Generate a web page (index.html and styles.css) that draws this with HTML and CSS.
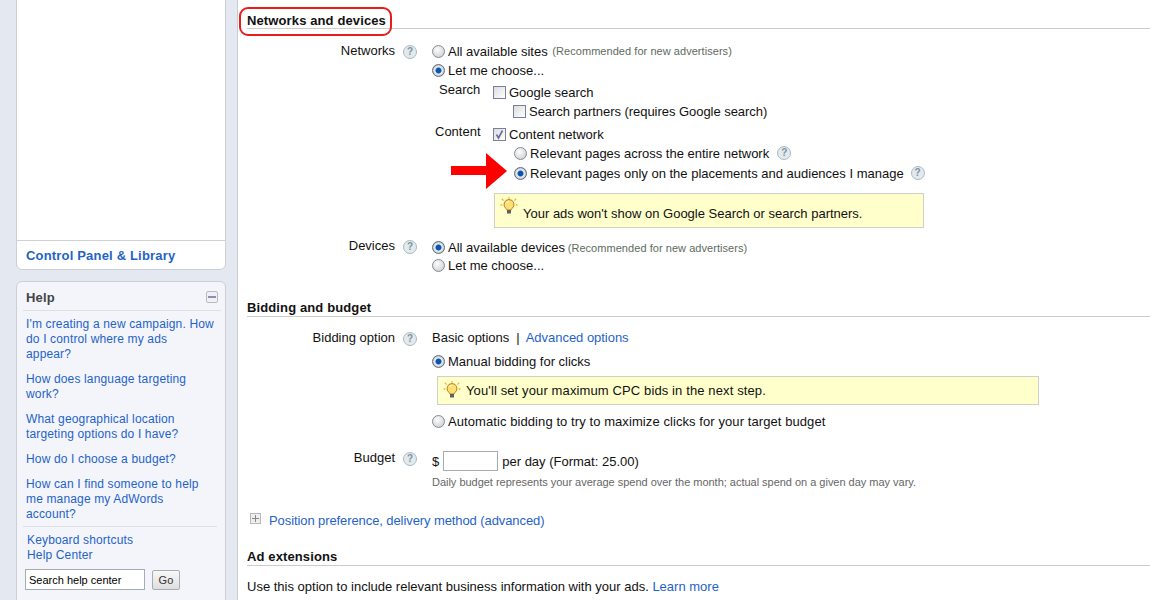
FILE: index.html
```html
<!DOCTYPE html>
<html lang="en">
<head>
<meta charset="utf-8">
<title>Networks and devices</title>
<link rel="stylesheet" href="styles.css">
</head>
<body>
<div class="page">
  <aside class="sidebar">
    <div class="panel">
      <div class="panel-blank"></div>
      <a class="panel-foot">Control Panel &amp; Library</a>
    </div>
    <div class="help">
      <div class="help-head"><span>Help</span><span class="collapse"></span></div>
      <ul class="help-links">
        <li>I'm creating a new campaign. How<br>do I control where my ads<br>appear?</li>
        <li>How does language targeting<br>work?</li>
        <li>What geographical location<br>targeting options do I have?</li>
        <li>How do I choose a budget?</li>
        <li>How can I find someone to help<br>me manage my AdWords<br>account?</li>
      </ul>
      <div class="help-extra">
        <a>Keyboard shortcuts</a>
        <a>Help Center</a>
      </div>
      <div class="help-search">
        <span class="search-box">Search help center</span>
        <span class="go">Go</span>
      </div>
    </div>
  </aside>
  <main class="main">
    <h2 class="section first">Networks and devices</h2>
    <div class="highlight"></div>

    <div class="row r-networks">
      <div class="label">Networks</div><span class="q">?</span>
      <div class="field">
        <div class="opt"><span class="radio"></span>All available sites <small class="rec rec-a">(Recommended for new advertisers)</small></div>
        <div class="opt short"><span class="radio on"></span>Let me choose...</div>
        <div class="sub s-search">
          <span class="sub-label">Search</span>
          <div>
            <div class="opt-c"><span class="check"></span>Google search</div>
            <div class="opt-c indent tight"><span class="check"></span>Search partners (requires Google search)</div>
          </div>
        </div>
        <div class="sub s-content">
          <span class="sub-label">Content</span>
          <div>
            <div class="opt-c"><span class="check on"><svg viewBox="0 0 13 13" width="13" height="13"><path d="M3.5 6.500l2 3.500 4-7.500" fill="none" stroke="#6a6f9a" stroke-width="1.600"/></svg></span>Content network</div>
            <div class="opt indent-r"><span class="radio"></span>Relevant pages across the entire network<span class="q q-inline">?</span></div>
            <div class="opt indent-r"><span class="radio on"></span>Relevant pages only on the placements and audiences I manage<span class="q q-inline q-near">?</span></div>
          </div>
        </div>
        <div class="tip tip-a">
          <svg class="bulb" viewBox="0 0 18 18" width="18" height="18"><path d="M9 2.500a5 5 0 0 0-3 9c.6.500.8 1 .8 1.500h4.400c0-.5.200-1 .8-1.500a5 5 0 0 0-3-9z" fill="#fcdf76" stroke="#b9821c"/><path d="M7 5.500a3 3 0 0 1 2-1" fill="none" stroke="#fffbe0" stroke-width="1.200"/><rect x="7" y="13" width="4" height="3.500" fill="#5f5f5f"/><path d="M.5 8h1.800M15.700 8h1.800M1.800 1.800l1.800 1.800M16.200 1.800l-1.800 1.800M9 0v1.800" stroke="#efb92e" stroke-width="1.300"/></svg>
          <span>Your ads won't show on Google Search or search partners.</span>
        </div>
      </div>
    </div>

    <div class="row r-devices">
      <div class="label">Devices</div><span class="q">?</span>
      <div class="field">
        <div class="opt"><span class="radio on"></span>All available devices <small class="rec">(Recommended for new advertisers)</small></div>
        <div class="opt"><span class="radio"></span>Let me choose...</div>
      </div>
    </div>

    <h2 class="section bid">Bidding and budget</h2>

    <div class="row r-bidding">
      <div class="label">Bidding option</div><span class="q">?</span>
      <div class="field">
        <div class="basic"><span>Basic options</span><span>|</span><a>Advanced options</a></div>
        <div class="opt manual"><span class="radio on"></span>Manual bidding for clicks</div>
        <div class="tip tip-b">
          <svg class="bulb" viewBox="0 0 18 18" width="18" height="18"><path d="M9 2.500a5 5 0 0 0-3 9c.6.500.8 1 .8 1.500h4.400c0-.5.200-1 .8-1.500a5 5 0 0 0-3-9z" fill="#fcdf76" stroke="#b9821c"/><path d="M7 5.500a3 3 0 0 1 2-1" fill="none" stroke="#fffbe0" stroke-width="1.200"/><rect x="7" y="13" width="4" height="3.500" fill="#5f5f5f"/><path d="M.5 8h1.800M15.700 8h1.800M1.800 1.800l1.800 1.800M16.200 1.800l-1.800 1.800M9 0v1.800" stroke="#efb92e" stroke-width="1.300"/></svg>
          <span class="wide">You'll set your maximum CPC bids in the next step.</span>
        </div>
        <div class="opt auto"><span class="radio"></span>Automatic bidding to try to maximize clicks for your target budget</div>
      </div>
    </div>

    <div class="row r-budget">
      <div class="label">Budget</div><span class="q">?</span>
      <div class="field">
        <div class="budget"><span>$</span><span class="amount"></span><span>per day (Format: 25.00)</span></div>
        <div class="note">Daily budget represents your average spend over the month; actual spend on a given day may vary.</div>
      </div>
    </div>

    <div class="advanced"><span class="plus"></span><a>Position preference, delivery method (advanced)</a></div>

    <h2 class="section ext">Ad extensions</h2>
    <p class="ext-text">Use this option to include relevant business information with your ads. <a>Learn more</a></p>

    <svg class="arrow" viewBox="0 0 56 36" width="56" height="36"><path d="M0 13h35V0l21 18-21 18V22H0z" fill="#f00"/></svg>
  </main>
</div>
</body>
</html>
```
FILE: styles.css
```css
* { box-sizing: border-box; }
html, body { margin: 0; padding: 0; height: 600px; overflow: hidden; background: #fff; }
body { font-family: "Liberation Sans", Arial, sans-serif; font-size: 13px; letter-spacing: 0; color: #111; }
a { color: #1f63c9; }
.page { display: flex; height: 600px; overflow: hidden; }

.sidebar { width: 238px; flex: none; height: 600px; background: #e4e8f1; border-right: 1px solid #c9ccd2; padding-left: 16px; padding-right: 11px; overflow: hidden; }
.panel { margin-top: -10px; height: 280px; background: #fff; border: 1px solid #cccfd4; border-radius: 0 0 6px 6px; display: flex; flex-direction: column; }
.panel-blank { flex: 1; border-bottom: 1px solid #cfd2d6; }
.panel-foot { height: 28px; line-height: 29px; padding-left: 9px; font-weight: bold; font-size: 13px; letter-spacing: .18px; }
.help { margin-top: 11px; height: 340px; background: #f3f5fa; border: 1px solid #cccfd4; border-radius: 6px 6px 0 0; padding: 0 4px 0 6px; font-size: 12px; letter-spacing: .15px; }
.help-head { height: 29px; border-bottom: 1px solid #dcdfe4; display: flex; justify-content: space-between; align-items: center; padding: 2px 3px 0 3px; font-size: 13px; font-weight: bold; color: #444; }
.collapse { width: 12px; height: 12px; border: 1px solid #b8bbc4; border-radius: 2px; background: linear-gradient(#8a90a8, #8a90a8) center / 8px 2px no-repeat #eef0f5; }
.help-links { list-style: none; margin: 6px 0 0; padding: 0 0 0 3px; }
.help-links li { color: #1f63c9; line-height: 15px; margin-bottom: 10px; white-space: nowrap; }
.help-extra { margin-top: -6px; border-top: 1px solid #dcdfe4; padding: 6px 0 0 4px; margin-right: 4px; }
.help-extra a { display: block; line-height: 15px; }
.help-search { display: flex; align-items: center; gap: 7px; margin-top: 6px; padding-left: 2px; }
.search-box { width: 120px; height: 21px; line-height: 20px; border: 1px solid #a5acb2; background: #fff; padding-left: 3px; font-size: 11px; letter-spacing: 0; color: #000; }
.go { width: 28px; height: 20px; line-height: 18px; text-align: center; border: 1px solid #a9adb3; border-radius: 2px; background: linear-gradient(#f8f8f8, #dedede); font-size: 11px; color: #333; }

.main { flex: 1; position: relative; padding-left: 9px; }
.section { margin: 0; font-size: 13px; font-weight: bold; letter-spacing: .12px; color: #111; height: 18px; line-height: 18px; border-bottom: 1px solid #ccc; }
.section.first { margin-top: 11px; line-height: 20px; }
.highlight { position: absolute; left: 1px; top: 7px; width: 153px; height: 29px; border: 2px solid #e81c1c; border-radius: 9px; }
.row { display: flex; align-items: flex-start; }
.label { width: 148px; text-align: right; line-height: 20px; }
.q { flex: none; width: 14px; height: 14px; margin: 4px 0 0 8px; border-radius: 50%; border: 1px solid #a9bcc4; background: #e2eaed; color: #7f929c; font-size: 10px; font-weight: bold; line-height: 12px; text-align: center; letter-spacing: 0; }
.q-inline { margin: 0 0 0 8px; }
.q-near { margin-left: 7px; }
.field { margin-left: 15px; flex: 1; }
.opt, .opt-c { display: flex; align-items: center; height: 20px; white-space: pre; }
.opt.short { height: 19px; }
.radio { flex: none; width: 13px; height: 13px; margin-right: 3px; border-radius: 50%; border: 1px solid #868b90; background: radial-gradient(circle at 40% 35%, #fdfdfd, #c6c8cb); }
.radio.on { background: radial-gradient(circle, #0a55b0 0, #0a55b0 2.500px, #eef1f4 3.500px, #b4bcc8 6px); border-color: #5f6a78; }
.check { flex: none; width: 13px; height: 13px; margin-right: 3px; border: 1px solid #7a7f9f; background: linear-gradient(135deg, #dcdcdc, #fff); display: block; }
.check svg { display: block; margin: -1px; }
.rec { font-size: 11px; color: #5e6b5e; letter-spacing: .05px; margin-left: -1px; }
.rec-a { margin-left: 0; padding-left: 1px; }
.r-networks { margin-top: 12px; }
.sub { display: flex; position: relative; }
.sub-label { width: 61px; padding-left: 7px; flex: none; }
.s-search { height: 42px; }
.s-search .sub-label { line-height: 20px; }
.s-search .opt-c { height: 20px; margin-top: 2px; margin-bottom: -3px; }
.s-search .opt-c.indent { margin-top: 2px; margin-bottom: 0; }
.tight { letter-spacing: -.04px; }
.s-content { height: 60px; }
.s-content .sub-label { padding-left: 3px; line-height: 20px; }
.s-content .opt-c { margin-top: 3px; height: 18px; }
.indent { margin-left: 20px; }
.indent-r { margin-left: 21px; }
.tip { display: flex; align-items: center; background: #ffffcc; border: 1px solid #d0d0c8; color: #111; position: relative; white-space: nowrap; }
.bulb { position: absolute; }
.wide { letter-spacing: .12px; }
.tip-a { margin: 11px 0 0 62px; width: 430px; height: 35px; padding: 5px 0 0 28px; }
.tip-a .bulb { left: 5px; top: 3px; }
.tip-b { margin: 5px 0 0 5px; width: 602px; height: 29px; padding-left: 28px; }
.tip-b .bulb { left: 5px; top: 4px; }
.r-devices { margin-top: 8px; }
.r-devices .opt { height: 19px; }
.r-devices .opt + .opt { margin-top: -1px; }
.r-devices .field { padding-top: 2px; }
.bid { margin-top: 24px; }
.r-bidding { margin-top: 11px; }
.basic { display: flex; gap: 7px; line-height: 20px; }
.basic a { margin-left: -1px; letter-spacing: -.03px; }
.manual { margin-top: 3px; }
.auto { margin-top: 6px; letter-spacing: .08px; }
.r-budget { margin-top: 17px; }
.budget { display: flex; align-items: center; height: 20px; gap: 4px; margin-top: 3px; }
.amount { width: 55px; height: 20px; border: 1px solid #a5acb2; background: #fff; }
.note { font-size: 11px; letter-spacing: -.02px; color: #666; margin-top: 5px; line-height: 13px; }
.advanced { display: flex; align-items: center; height: 20px; margin-top: 21px; letter-spacing: -.09px; }
.plus { width: 11px; height: 11px; margin: -4px 8px 0 3px; border: 1px solid #b5b8bc; background: linear-gradient(#888, #888) center / 7px 1px no-repeat, linear-gradient(#888, #888) center / 1px 7px no-repeat, #eee; flex: none; }
.ext { margin-top: 18px; }
.ext-text { margin: 13px 0 0; }
.arrow { position: absolute; left: 213px; top: 153px; }
```
